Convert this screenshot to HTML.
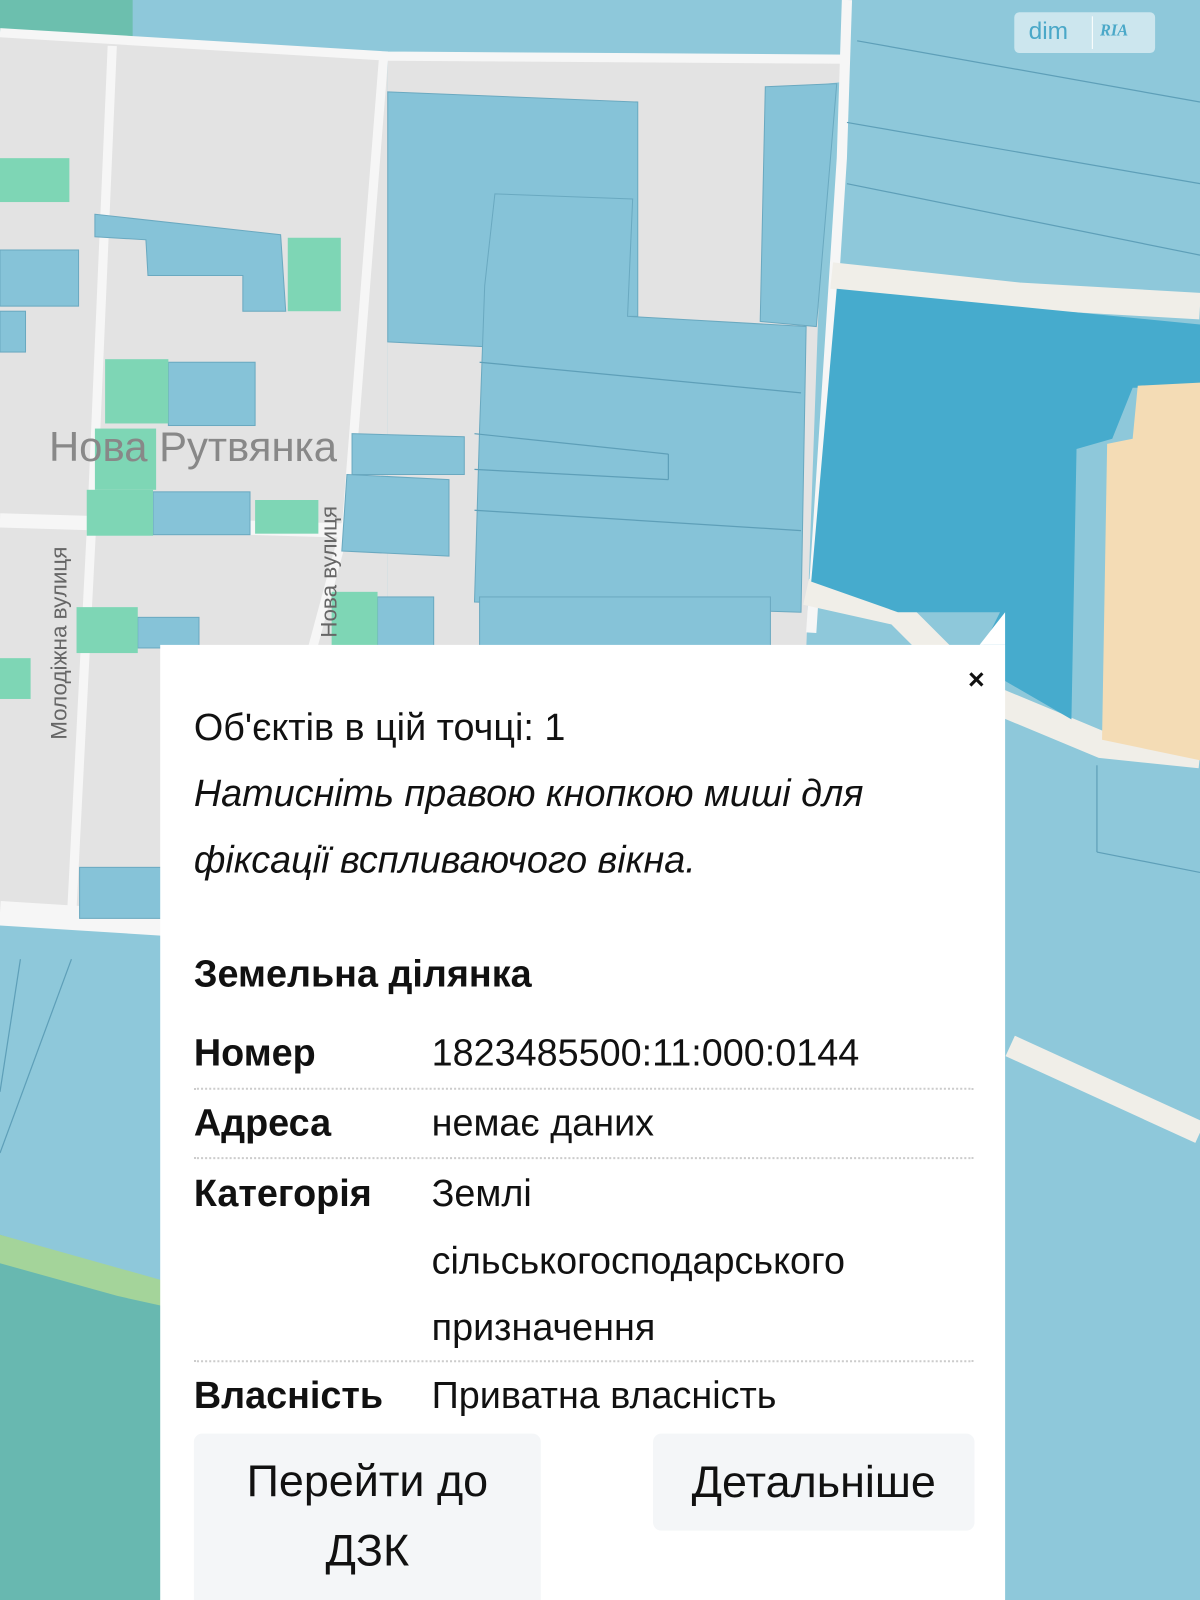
<!DOCTYPE html>
<html><head><meta charset="utf-8"><style>
html,body{margin:0;padding:0;width:1200px;height:1600px;overflow:hidden;background:#8ec8da}
#w{position:absolute;left:0;top:0;width:1176px;height:1568px;overflow:hidden;transform:scale(1.020408);transform-origin:0 0;font-family:"Liberation Sans","DejaVu Sans",sans-serif}
svg{position:absolute;left:0;top:0}
.pop{position:absolute;left:157px;top:632px;width:828px;height:936px;background:#fff;color:#111;overflow:hidden}
.t{position:absolute;left:33px;font-size:37px;line-height:38px;white-space:nowrap}
.i{font-style:italic}
.b{font-weight:bold}
.v{position:absolute;left:266px;font-size:37px;line-height:38px;white-space:nowrap}
.dl{position:absolute;left:33px;width:764px;border-top:2px dotted #ccc}
.btn{position:absolute;background:#f4f6f8;border-radius:8px;font-size:44px;text-align:center;color:#111}
.logo{position:absolute;left:994px;top:12px;width:138px;height:40px;background:rgba(255,255,255,.55);border-radius:5px;color:#4aa8c8;font-size:24px}
</style></head><body><div id="w">
<svg width="1176" height="1568" viewBox="0 0 1176 1568">
<rect width="1176" height="1568" fill="#8ec8da"/>
<polygon points="0,0 130,0 130,40 0,30" fill="#6cbfae"/>
<polygon points="0,33 380,52 380,640 0,640" fill="#e3e3e3"/>
<polygon points="380,55 830,60 830,80 810,82 790,640 380,640" fill="#e3e3e3"/>
<polygon points="0,520 0,900 160,910 160,520" fill="#e3e3e3"/>
<polyline points="0,32 380,55 830,58" stroke="#f6f6f6" stroke-width="9" fill="none"/>
<polyline points="110,45 90,510 70,900" stroke="#f6f6f6" stroke-width="9" fill="none"/>
<polyline points="376,55 340,510 305,640" stroke="#f6f6f6" stroke-width="9" fill="none"/>
<polyline points="0,510 340,520" stroke="#f6f6f6" stroke-width="14" fill="none"/>
<polyline points="0,895 160,905" stroke="#f6f6f6" stroke-width="24" fill="none"/>
<polyline points="830,0 825,155 795,620" stroke="#f6f6f6" stroke-width="10" fill="none"/>
<polyline points="815,270 1000,290 1176,300" stroke="#f0eee8" stroke-width="26" fill="none"/>
<polyline points="790,580 880,600 960,680 1080,730 1176,740" stroke="#f0eee8" stroke-width="26" fill="none"/>
<polyline points="990,1025 1176,1110" stroke="#f0eee8" stroke-width="22" fill="none"/>
<g fill="#86c3d8" stroke="#6aa9c0" stroke-width="1">
<polygon points="380,90 625,100 625,310 610,310 610,290 485,280 480,340 380,335"/>
<polygon points="485,190 620,195 615,310 790,320 785,600 465,590 470,420 475,280"/>
<polygon points="750,85 820,82 800,320 745,315"/>
<polygon points="93,210 275,230 280,305 238,305 238,270 145,270 143,235 93,232"/>
<rect x="0" y="245" width="77" height="55"/>
<rect x="0" y="305" width="25" height="40"/>
<rect x="165" y="355" width="85" height="62"/>
<polygon points="345,425 455,428 455,465 345,465"/>
<polygon points="340,465 440,470 440,545 335,540"/>
<rect x="150" y="482" width="95" height="42"/>
<rect x="135" y="605" width="60" height="30"/>
<rect x="370" y="585" width="55" height="50"/>
<rect x="470" y="585" width="285" height="50"/>
<rect x="78" y="850" width="80" height="50"/>
</g>
<g fill="#7ed6b5">
<rect x="0" y="155" width="68" height="43"/>
<rect x="282" y="233" width="52" height="72"/>
<rect x="103" y="352" width="62" height="63"/>
<rect x="93" y="420" width="60" height="60"/>
<rect x="85" y="480" width="65" height="45"/>
<rect x="250" y="490" width="62" height="33"/>
<rect x="75" y="595" width="60" height="45"/>
<rect x="325" y="580" width="45" height="55"/>
<rect x="0" y="645" width="30" height="40"/>
</g>
<g stroke="#5e9fb8" stroke-width="1.2" fill="none">
<line x1="465" y1="425" x2="655" y2="445"/><line x1="655" y1="445" x2="655" y2="470"/><line x1="465" y1="460" x2="655" y2="470"/>
<line x1="470" y1="355" x2="785" y2="385"/><line x1="465" y1="500" x2="785" y2="520"/>
<line x1="840" y1="40" x2="1176" y2="100"/><line x1="830" y1="120" x2="1176" y2="180"/><line x1="830" y1="180" x2="1176" y2="250"/>
<line x1="20" y1="940" x2="0" y2="1070"/><line x1="70" y1="940" x2="0" y2="1130"/><line x1="1075" y1="750" x2="1075" y2="835"/><line x1="1075" y1="835" x2="1176" y2="855"/>
</g>
<polygon points="820,283 1176,318 1176,380 1110,380 1090,430 1055,440 1050,705 955,650 980,600 880,600 795,570" fill="#46abcd"/>
<polygon points="1115,378 1176,375 1176,745 1080,725 1085,435 1110,430" fill="#f4dcb5"/>
<polygon points="0,1210 160,1260 160,1568 0,1568" fill="#68b8b0"/>
<polygon points="0,1210 160,1255 160,1280 115,1270 0,1238" fill="#a4d49a"/>
<text x="48" y="452" font-size="41" fill="#888" font-family="Liberation Sans">Нова Рутвянка</text>
<text transform="translate(65,725) rotate(-90)" font-size="22" fill="#666" font-family="Liberation Sans">Молодіжна вулиця</text>
<text transform="translate(330,625) rotate(-90)" font-size="22" fill="#666" font-family="Liberation Sans">Нова вулиця</text>
<polygon points="960,632 985,600 985,632" fill="#fff"/>
</svg>
<div class="logo"><span style="position:absolute;left:14px;top:5px">dim</span><span style="position:absolute;left:76px;top:4px;bottom:4px;border-left:1px solid #fff"></span><span style="position:absolute;left:84px;top:10px;font-size:16px;font-weight:bold;font-style:italic;font-family:'Liberation Serif',serif">RIA</span></div>
<div class="pop">
<div style="position:absolute;right:20px;top:18px;font-size:28px;font-weight:bold">×</div>
<div class="t" style="top:62px">Об'єктів в цій точці: 1</div>
<div class="t i" style="top:127px">Натисніть правою кнопкою миші для</div>
<div class="t i" style="top:192px">фіксації вспливаючого вікна.</div>
<div class="t b" style="top:304px">Земельна ділянка</div>
<div class="t b" style="top:381px">Номер</div><div class="v" style="top:381px">1823485500:11:000:0144</div>
<div class="dl" style="top:434px"></div>
<div class="t b" style="top:450px">Адреса</div><div class="v" style="top:450px">немає даних</div>
<div class="dl" style="top:502px"></div>
<div class="t b" style="top:519px">Категорія</div><div class="v" style="top:519px">Землі</div>
<div class="v" style="top:585px">сільськогосподарського</div>
<div class="v" style="top:650px">призначення</div>
<div class="dl" style="top:701px"></div>
<div class="t b" style="top:717px">Власність</div><div class="v" style="top:717px">Приватна власність</div>
<div class="btn" style="left:33px;top:773px;width:340px;height:180px;line-height:68px;padding-top:13px">Перейти до<br>ДЗК</div>
<div class="btn" style="left:483px;top:773px;width:315px;height:95px;line-height:95px">Детальніше</div>
</div>
</div></body></html>
